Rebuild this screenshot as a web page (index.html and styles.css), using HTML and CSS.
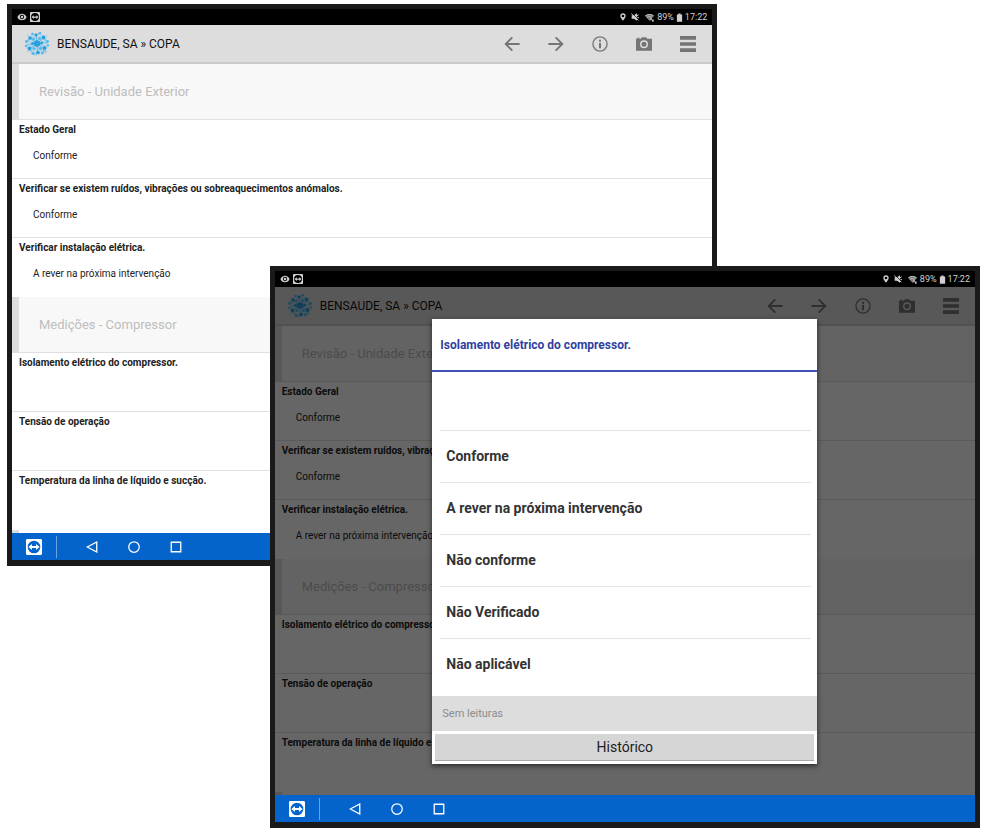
FILE: index.html
```
<!DOCTYPE html>
<html lang="pt">
<head>
<meta charset="utf-8">
<title>BENSAUDE, SA » COPA</title>
<link rel="stylesheet" href="styles.css">
</head>
<body>
<svg class="defs" aria-hidden="true">
  <symbol id="i-eye" viewBox="0 0 24 24"><path fill="currentColor" fill-rule="evenodd" d="M12 4C7 4 2.700 7.100 1 12c1.700 4.900 6 8 11 8s9.300-3.100 11-8c-1.700-4.900-6-8-11-8zm0 2.800a5.200 5.200 0 1 1 0 10.400 5.200 5.200 0 0 1 0-10.400z"/><circle cx="12" cy="12" r="3" fill="currentColor"/></symbol>
  <symbol id="i-tv" viewBox="0 0 24 24"><path fill="currentColor" fill-rule="evenodd" d="M2 0h20a2 2 0 0 1 2 2v20a2 2 0 0 1-2 2H2a2 2 0 0 1-2-2V2a2 2 0 0 1 2-2zm10 2.500a9.500 9.500 0 1 0 0 19 9.500 9.500 0 0 0 0-19z"/><path fill="currentColor" d="M3.500 12 9 7.500v3h6v-3l5.500 4.500-5.500 4.500v-3H9v3z"/></symbol>
  <symbol id="i-pin" viewBox="0 0 24 24"><path fill="currentColor" fill-rule="evenodd" d="M12 1a8 8 0 0 0-8 8c0 6 8 14 8 14s8-8 8-14a8 8 0 0 0-8-8zm0 4a4 4 0 1 1 0 8 4 4 0 0 1 0-8z"/></symbol>
  <symbol id="i-mute" viewBox="0 0 24 24"><path fill="currentColor" d="M2 7h7l9-6v22l-9-6H2z"/><path d="M4 1l20 20" stroke="#000" stroke-width="2"/><path d="M1 2l21 20M18 9l5-4M19 14h5" stroke="currentColor" stroke-width="3"/></symbol>
  <symbol id="i-wifi" viewBox="0 0 24 24"><path fill="currentColor" opacity=".6" d="M0 7C7 1 17 1 24 7L12 21z"/><path fill="none" stroke="currentColor" stroke-width="2" d="M1 7.500c6.500-5 15.500-5 22 0M5 12c4-3 10-3 14 0"/><path fill="currentColor" d="M14 14h4v5h-4zM19 17h4v6h-4z"/></symbol>
  <symbol id="i-battery" viewBox="0 0 16 24"><path fill="currentColor" d="M5 1h6v3h4v19H1V4h4z"/></symbol>
  <symbol id="i-left" viewBox="0 0 24 24"><path fill="none" stroke="currentColor" stroke-width="2.800" d="M23.500 12H3M12.500 2l-10 10 10 10"/></symbol>
  <symbol id="i-right" viewBox="0 0 24 24"><path fill="none" stroke="currentColor" stroke-width="2.800" d="M.5 12H21M11.500 2l10 10-10 10"/></symbol>
  <symbol id="i-info" viewBox="0 0 24 24"><circle cx="12" cy="12" r="10.600" fill="none" stroke="currentColor" stroke-width="2"/><path fill="currentColor" d="M10.500 5.500h3v3h-3zM10.500 10.500h3v8h-3z"/></symbol>
  <symbol id="i-camera" viewBox="0 0 24 24"><path fill="currentColor" fill-rule="evenodd" d="M0 4h2V2.500h3V4h2l2-2h6l2 2h7v18H0zm12 2.500a6 6 0 1 0 0 12 6 6 0 0 0 0-12z"/><circle cx="12" cy="12.500" r="3.800" fill="currentColor"/></symbol>
  <symbol id="i-menu" viewBox="0 0 24 24"><path fill="currentColor" d="M0 0h24v5.500H0zM0 9.300h24v5.400H0zM0 18.500h24V24H0z"/></symbol>
  <symbol id="i-back" viewBox="0 0 24 24"><path fill="none" stroke="currentColor" stroke-width="2.600" d="M21.500 2v20L2.500 12z"/></symbol>
  <symbol id="i-home" viewBox="0 0 24 24"><circle cx="12" cy="12" r="10.500" fill="none" stroke="currentColor" stroke-width="2.500"/></symbol>
  <symbol id="i-recent" viewBox="0 0 24 24"><path fill="none" stroke="currentColor" stroke-width="2.600" d="M2.500 2.500h19v19h-19z"/></symbol>
  <symbol id="i-logo" viewBox="0 0 52 52">
    <circle cx="26" cy="26" r="22" fill="#8ccbee" opacity=".35"/>
    <g fill="none" stroke="#58b4e6" stroke-width="1.800"><path d="M26 26 12 14M26 26l13-13M26 26l15 8M26 26 11 35M26 26l2 18M26 26 24 7M12 14l-6 8M39 13l7 9M41 34l-4 10M11 35l7 9M24 7l8-2M28 44l-8 3M6 28l12-3M34 22l12 2"/></g>
    <g fill="#2a9fe0"><circle cx="26" cy="25" r="6.500"/><circle cx="12" cy="14" r="3.600"/><circle cx="39" cy="13" r="3.800"/><circle cx="41" cy="34" r="4"/><circle cx="11" cy="35" r="3.800"/><circle cx="28" cy="43" r="3.600"/><circle cx="24" cy="8" r="3"/><circle cx="35" cy="24" r="3"/><circle cx="17" cy="25" r="3"/></g>
    <g fill="#54b9ea"><circle cx="5" cy="21" r="2.800"/><circle cx="4" cy="30" r="2.300"/><circle cx="47" cy="21" r="2.900"/><circle cx="48" cy="29" r="2.300"/><circle cx="18" cy="45" r="2.900"/><circle cx="37" cy="44" r="2.900"/><circle cx="32" cy="4" r="2.500"/><circle cx="17" cy="6" r="2.600"/><circle cx="33" cy="35" r="3.300"/><circle cx="20" cy="35" r="3.200"/><circle cx="19" cy="16" r="2.900"/><circle cx="31" cy="15" r="3"/><circle cx="43" cy="41" r="2"/></g>
    <g fill="#9bd5f2"><circle cx="8" cy="9" r="1.800"/><circle cx="45" cy="10" r="2"/><circle cx="25" cy="49" r="1.900"/><circle cx="7" cy="41" r="1.800"/><circle cx="11" cy="21" r="2.200"/><circle cx="41" cy="22" r="2.200"/><circle cx="25" cy="36" r="2"/><circle cx="10" cy="28" r="2"/><circle cx="34" cy="9" r="1.800"/><circle cx="36" cy="30" r="2"/></g>
  </symbol>
</svg>

<main class="stage">
  <section class="device device-back" aria-label="Revisão">
    <div class="status">
      <svg class="s-icon eye"><use href="#i-eye"/></svg><svg class="s-icon tv"><use href="#i-tv"/></svg>
      <span class="spacer"></span>
      <svg class="s-icon"><use href="#i-pin"/></svg><svg class="s-icon mute"><use href="#i-mute"/></svg><svg class="s-icon wifi"><use href="#i-wifi"/></svg>
      <span>89%</span><svg class="s-icon battery"><use href="#i-battery"/></svg><span>17:22</span>
    </div>
    <div class="screen">
      <header class="appbar">
        <svg class="logo"><use href="#i-logo"/></svg>
        <h1>BENSAUDE, SA » COPA</h1>
        <button type="button" aria-label="Anterior"><svg><use href="#i-left"/></svg></button>
        <button type="button" aria-label="Seguinte"><svg><use href="#i-right"/></svg></button>
        <button type="button" aria-label="Informação"><svg><use href="#i-info"/></svg></button>
        <button type="button" aria-label="Fotografia"><svg><use href="#i-camera"/></svg></button>
        <button type="button" aria-label="Menu"><svg><use href="#i-menu"/></svg></button>
      </header>
      <h2 class="group">Revisão - Unidade Exterior</h2>
      <div class="item"><h3>Estado Geral</h3><p>Conforme</p></div>
      <div class="item"><h3>Verificar se existem ruídos, vibrações ou sobreaquecimentos anómalos.</h3><p>Conforme</p></div>
      <div class="item last"><h3>Verificar instalação elétrica.</h3><p>A rever na próxima intervenção</p></div>
      <h2 class="group">Medições - Compressor</h2>
      <div class="item"><h3>Isolamento elétrico do compressor.</h3></div>
      <div class="item"><h3>Tensão de operação</h3></div>
      <div class="item last"><h3>Temperatura da linha de líquido e sucção.</h3></div>
      <div class="peek"></div>
    </div>
    <nav class="navbar">
      <button type="button" class="remote" aria-label="Controlo remoto"><svg><use href="#i-tv"/></svg></button>
      <button type="button" aria-label="Voltar"><svg><use href="#i-back"/></svg></button>
      <button type="button" aria-label="Início"><svg><use href="#i-home"/></svg></button>
      <button type="button" aria-label="Recentes"><svg><use href="#i-recent"/></svg></button>
    </nav>
  </section>

  <section class="device device-front" aria-label="Leitura">
    <div class="status">
      <svg class="s-icon eye"><use href="#i-eye"/></svg><svg class="s-icon tv"><use href="#i-tv"/></svg>
      <span class="spacer"></span>
      <svg class="s-icon"><use href="#i-pin"/></svg><svg class="s-icon mute"><use href="#i-mute"/></svg><svg class="s-icon wifi"><use href="#i-wifi"/></svg>
      <span>89%</span><svg class="s-icon battery"><use href="#i-battery"/></svg><span>17:22</span>
    </div>
    <div class="screen">
      <header class="appbar">
        <svg class="logo"><use href="#i-logo"/></svg>
        <h1>BENSAUDE, SA » COPA</h1>
        <button type="button" aria-label="Anterior"><svg><use href="#i-left"/></svg></button>
        <button type="button" aria-label="Seguinte"><svg><use href="#i-right"/></svg></button>
        <button type="button" aria-label="Informação"><svg><use href="#i-info"/></svg></button>
        <button type="button" aria-label="Fotografia"><svg><use href="#i-camera"/></svg></button>
        <button type="button" aria-label="Menu"><svg><use href="#i-menu"/></svg></button>
      </header>
      <h2 class="group">Revisão - Unidade Exterior</h2>
      <div class="item"><h3>Estado Geral</h3><p>Conforme</p></div>
      <div class="item"><h3>Verificar se existem ruídos, vibrações ou sobreaquecimentos anómalos.</h3><p>Conforme</p></div>
      <div class="item last"><h3>Verificar instalação elétrica.</h3><p>A rever na próxima intervenção</p></div>
      <h2 class="group">Medições - Compressor</h2>
      <div class="item"><h3>Isolamento elétrico do compressor.</h3></div>
      <div class="item"><h3>Tensão de operação</h3></div>
      <div class="item last"><h3>Temperatura da linha de líquido e sucção.</h3></div>
      <div class="peek"></div>
      <div class="scrim">
        <div class="dialog" role="dialog" aria-labelledby="dlg-title">
          <h2 id="dlg-title">Isolamento elétrico do compressor.</h2>
          <div class="options">
            <button type="button" class="blank" aria-label="Sem valor"></button>
            <button type="button">Conforme</button>
            <button type="button">A rever na próxima intervenção</button>
            <button type="button">Não conforme</button>
            <button type="button">Não Verificado</button>
            <button type="button">Não aplicável</button>
          </div>
          <p class="readings">Sem leituras</p>
          <button type="button" class="history">Histórico</button>
        </div>
      </div>
    </div>
    <nav class="navbar">
      <button type="button" class="remote" aria-label="Controlo remoto"><svg><use href="#i-tv"/></svg></button>
      <button type="button" aria-label="Voltar"><svg><use href="#i-back"/></svg></button>
      <button type="button" aria-label="Início"><svg><use href="#i-home"/></svg></button>
      <button type="button" aria-label="Recentes"><svg><use href="#i-recent"/></svg></button>
    </nav>
  </section>
</main>
</body>
</html>
```

FILE: styles.css
```
* { box-sizing: border-box; }
body { margin: 0; background: #fff; color: #222; font-family: Roboto, sans-serif; }
h1, h2, h3, p { margin: 0; }
button { border: 0; padding: 0; margin: 0; background: none; color: inherit; font: inherit; }
svg { display: block; }
.defs { position: absolute; width: 0; height: 0; }

/* Two overlapping tablets share one grid cell */
.stage { display: grid; padding: 4px 4px 3px 7px; }
.device {
  grid-area: 1 / 1;
  isolation: isolate;
  width: 73%;
  border: solid #1a1a1a;
  border-width: 5px 5px 6px;
  background: #fff;
}
.device-back { justify-self: start; align-self: start; }
.device-front { justify-self: end; margin-top: 262px; }

.status {
  display: flex;
  align-items: center;
  height: 16px;
  padding: 0 5px 0 4px;
  background: #000;
  color: #d0d0d0;
  font-size: 9px;
}
.spacer { flex: 1; }
.s-icon { width: 8px; height: 8px; }
.eye { width: 12px; height: 10px; }
.tv { width: 10px; height: 10px; margin-left: 2px; }
.mute { margin-left: 4px; }
.wifi { width: 11px; height: 9px; margin: 0 2px 0 5px; }
.battery { width: 7px; height: 9px; margin: 0 2px; }

.screen { position: relative; }
.appbar {
  display: flex;
  align-items: center;
  height: 39px;
  padding: 0 2px 0 12px;
  border-bottom: 2px solid #cacaca;
  background: #ddd;
  color: #757575;
}
.logo { width: 26px; height: 26px; }
.appbar h1 { flex: 1; margin-left: 7px; color: #111; font-size: 12px; font-weight: 400; }
.appbar button { display: grid; place-items: center; width: 44px; height: 37px; }
.appbar button svg { width: 16px; height: 16px; }

.group {
  display: flex;
  align-items: center;
  height: 56px;
  padding: 0 0 2px 20px;
  border-left: 7px solid #ddd;
  box-shadow: inset 0 -1px #e0e0e0;
  background: #f8f8f8;
  color: #bdbdbd;
  font-size: 13px;
  font-weight: 400;
}
.item { height: 59px; padding: 4px 7px; border-bottom: 1px solid #e0e0e0; font-size: 10px; line-height: 12px; }
.item.last { border-bottom: 0; }
.item h3 { font-size: 10px; font-weight: 700; }
.item p { margin: 14px 0 0 14px; }
.peek { height: 3px; border-left: 7px solid #ddd; background: #fff; }

.navbar { display: flex; align-items: center; height: 27px; background: #0564cb; color: #fff; }
.navbar button { display: grid; place-items: center; width: 42px; height: 22px; }
.navbar svg { width: 12px; height: 12px; }
.navbar .remote { width: 45px; margin-right: 14px; border-right: 1px solid #6aa5e2; }
.navbar .remote svg { width: 16px; height: 16px; }

.scrim {
  position: absolute;
  inset: 0;
  display: flex;
  align-items: center;
  justify-content: center;
  background: rgba(0, 0, 0, .6);
}
.dialog { width: 55%; background: #fff; box-shadow: 0 2px 5px rgba(0, 0, 0, .6); }
.dialog h2 {
  height: 53px;
  padding-left: 8px;
  border-bottom: 2px solid #3f51b5;
  color: #303f9f;
  font-size: 12px;
  line-height: 52px;
}
.options { display: flex; flex-direction: column; padding: 0 6px 0 8px; }
.options button {
  height: 52px;
  padding-left: 6px;
  border-bottom: 1px solid #e4e4e4;
  color: #333;
  font-size: 14px;
  font-weight: 700;
  text-align: left;
}
.options .blank { height: 59px; }
.options button:last-child { height: 57px; padding-bottom: 6px; border-bottom: 0; }
.readings { height: 35px; padding-left: 10px; background: #ddd; color: #8c8c8c; font-size: 11px; line-height: 36px; }
.history {
  display: block;
  width: calc(100% - 6px);
  height: 27px;
  margin: 3px;
  border-bottom: 1px solid #aaa;
  background: #d6d6d6;
  color: #222;
  font-size: 14px;
}
```
